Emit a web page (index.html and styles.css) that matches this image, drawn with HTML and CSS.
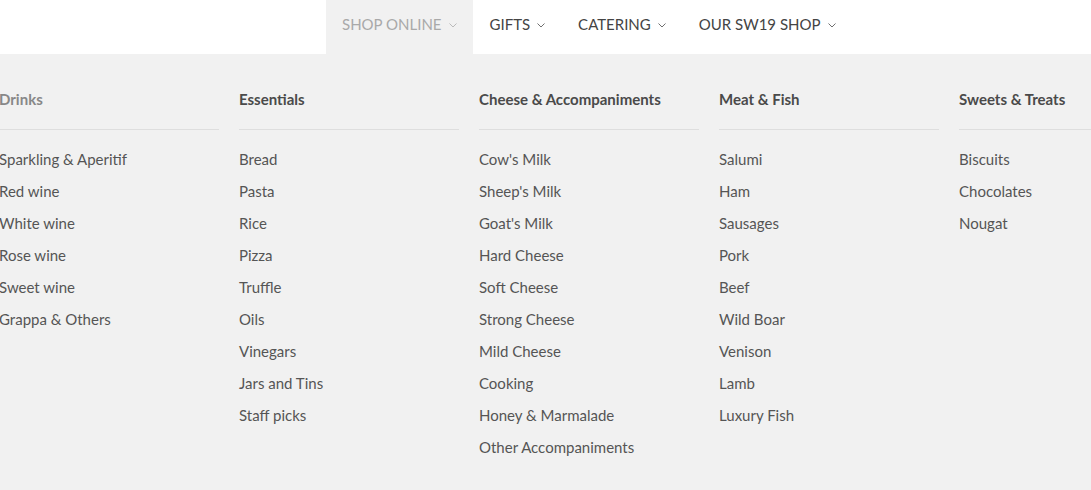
FILE: index.html
```html
<!DOCTYPE html>
<html>
<head>
<meta charset="utf-8">
<link rel="stylesheet" href="styles.css">
</head>
<body>
<nav class="topnav">
  <ul class="nav-list">
    <li class="nav-item active">SHOP ONLINE<svg class="chev" viewBox="0 0 8 5"><path d="M0.5 0.5 L4 4 L7.5 0.5"/></svg></li>
    <li class="nav-item">GIFTS<svg class="chev" viewBox="0 0 8 5"><path d="M0.5 0.5 L4 4 L7.5 0.5"/></svg></li>
    <li class="nav-item">CATERING<svg class="chev" viewBox="0 0 8 5"><path d="M0.5 0.5 L4 4 L7.5 0.5"/></svg></li>
    <li class="nav-item">OUR SW19 SHOP<svg class="chev" viewBox="0 0 8 5"><path d="M0.5 0.5 L4 4 L7.5 0.5"/></svg></li>
  </ul>
</nav>
<section class="mega">
  <div class="mega-inner">
  <div class="col">
    <h3 class="col-title muted">Drinks</h3>
    <ul class="links">
      <li>Sparkling &amp; Aperitif</li>
      <li>Red wine</li>
      <li>White wine</li>
      <li>Rose wine</li>
      <li>Sweet wine</li>
      <li>Grappa &amp; Others</li>
    </ul>
  </div>
  <div class="col">
    <h3 class="col-title">Essentials</h3>
    <ul class="links">
      <li>Bread</li>
      <li>Pasta</li>
      <li>Rice</li>
      <li>Pizza</li>
      <li>Truffle</li>
      <li>Oils</li>
      <li>Vinegars</li>
      <li>Jars and Tins</li>
      <li>Staff picks</li>
    </ul>
  </div>
  <div class="col">
    <h3 class="col-title">Cheese &amp; Accompaniments</h3>
    <ul class="links">
      <li>Cow's Milk</li>
      <li>Sheep's Milk</li>
      <li>Goat's Milk</li>
      <li>Hard Cheese</li>
      <li>Soft Cheese</li>
      <li>Strong Cheese</li>
      <li>Mild Cheese</li>
      <li>Cooking</li>
      <li>Honey &amp; Marmalade</li>
      <li>Other Accompaniments</li>
    </ul>
  </div>
  <div class="col">
    <h3 class="col-title">Meat &amp; Fish</h3>
    <ul class="links">
      <li>Salumi</li>
      <li>Ham</li>
      <li>Sausages</li>
      <li>Pork</li>
      <li>Beef</li>
      <li>Wild Boar</li>
      <li>Venison</li>
      <li>Lamb</li>
      <li>Luxury Fish</li>
    </ul>
  </div>
  <div class="col">
    <h3 class="col-title">Sweets &amp; Treats</h3>
    <ul class="links">
      <li>Biscuits</li>
      <li>Chocolates</li>
      <li>Nougat</li>
    </ul>
  </div>
  </div>
</section>
</body>
</html>
```

FILE: styles.css
```css
* { box-sizing: border-box; }
html, body { margin: 0; padding: 0; height: 100%; }
body {
  font-family: Lato, "Open Sans", sans-serif;
  background: #f1f1f1;
  color: #555;
  overflow: hidden;
}
.topnav {
  background: #fff;
  height: 54px;
}
.nav-list {
  list-style: none;
  margin: 0;
  padding: 0 0 0 326px;
  display: flex;
  height: 54px;
}
.nav-item {
  display: flex;
  align-items: center;
  gap: 7px;
  padding: 0 16px 6px 16px;
  font-size: 15px;
  color: #444;
}
.nav-item + .nav-item { padding-left: 17px; }
.nav-item.active {
  background: #f1f1f1;
  color: #a9a9a9;
}
.chev {
  width: 8px;
  height: 5px;
  margin-top: 2px;
  fill: none;
  stroke: currentColor;
  stroke-width: 0.9;
  opacity: 0.85;
}
.mega {
  overflow: hidden;
  padding-top: 35px;
}
.mega-inner {
  display: flex;
  gap: 20px;
  margin-left: -1px;
}
.col {
  width: 220px;
  flex: 0 0 220px;
}
.col-title {
  margin: 0;
  font-size: 15px;
  font-weight: 700;
  line-height: 20px;
  color: #4a4a4a;
  padding-bottom: 20px;
  border-bottom: 1px solid #dedede;
}
.col-title.muted { color: #888; }
.links {
  list-style: none;
  margin: 13px 0 0 0;
  padding: 0;
}
.links li {
  font-size: 15px;
  line-height: 32px;
  color: #555;
  white-space: nowrap;
}
```
